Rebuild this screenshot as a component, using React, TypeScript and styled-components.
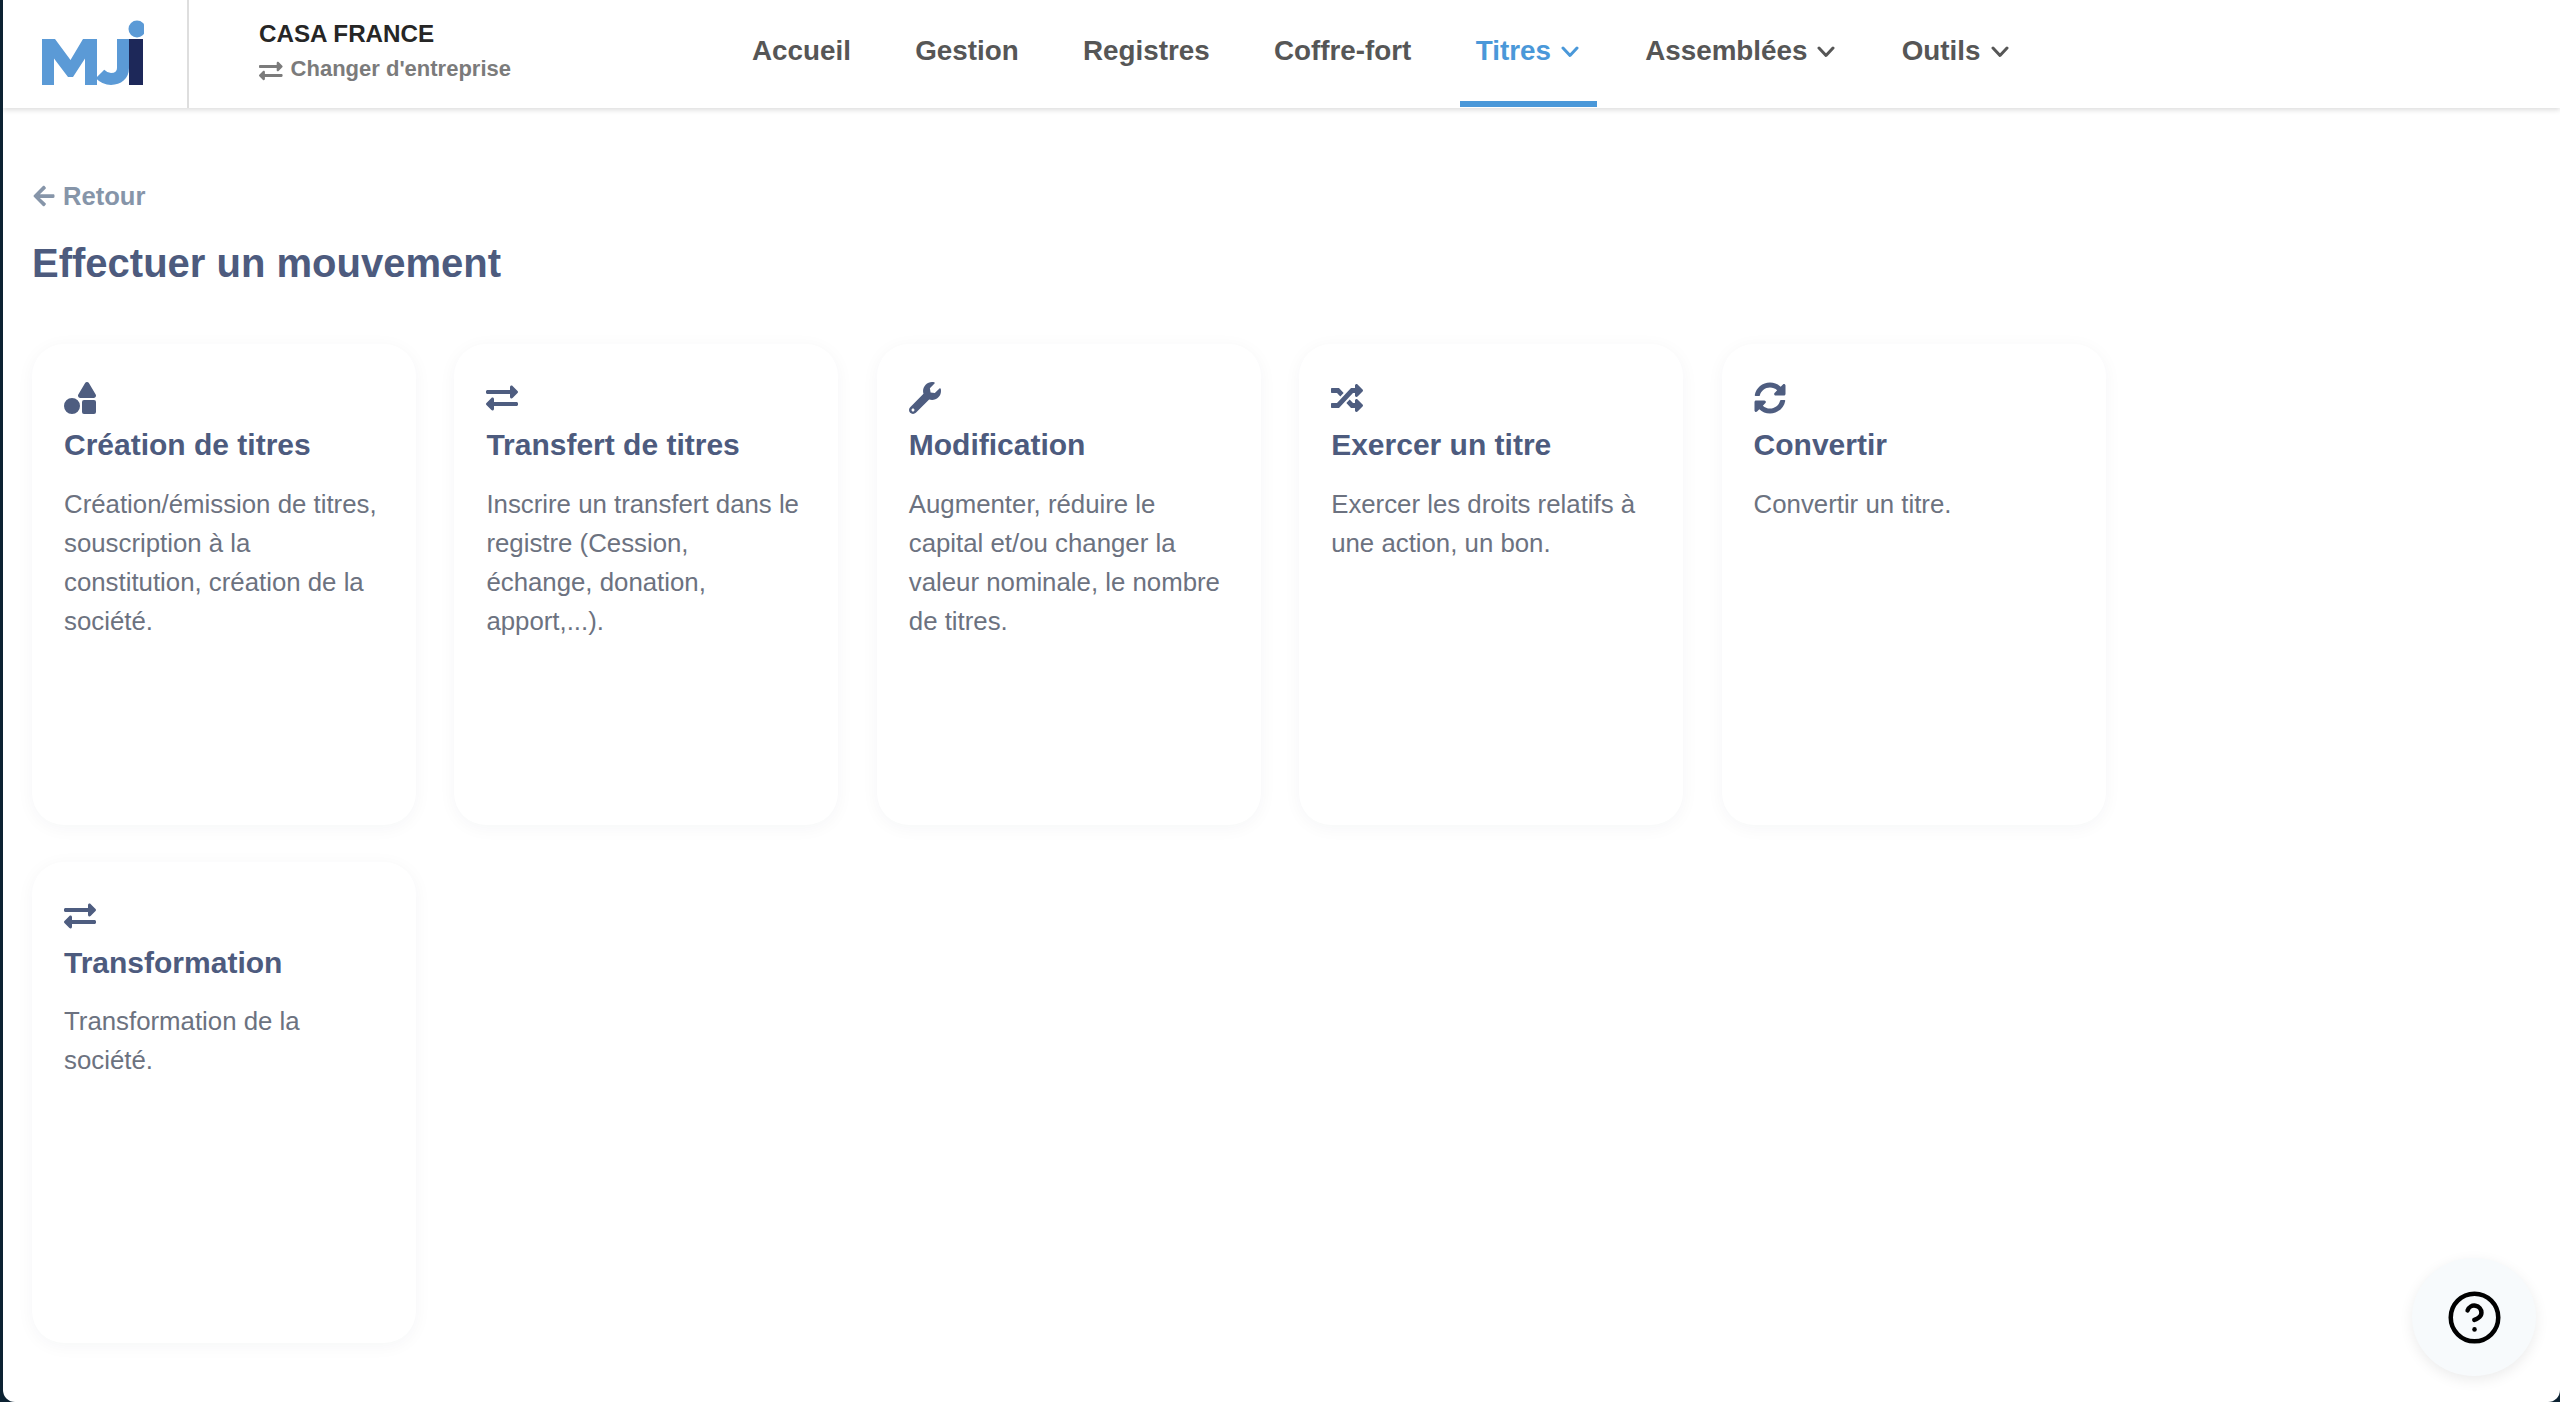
import React from "react";
import styled, { createGlobalStyle } from "styled-components";
import { CircleHelp } from "lucide-react";
import { FaArrowLeft, FaExchangeAlt, FaRandom, FaShapes, FaSyncAlt, FaWrench } from "react-icons/fa";

const GlobalStyle = createGlobalStyle`
  html, body {
    margin: 0;
    padding: 0;
    height: 100%;
    background: #0c2232;
  }
  * {
    box-sizing: border-box;
  }
`;

const Frame = styled.div`
  position: relative;
  height: 100vh;
  margin-left: 3px;
  overflow: hidden;
  background: #fff;
  border-radius: 0 0 12px 12px;
  font-family: "Liberation Sans", Arial, sans-serif;
`;

const Header = styled.header`
  display: flex;
  height: 108px;
  background: #fff;
  box-shadow: 0 2px 5px rgba(0, 0, 0, 0.14);
`;

const LogoBox = styled.div`
  display: flex;
  align-items: flex-start;
  width: 186px;
  height: 108px;
  padding: 20px 0 0 39px;
  border-right: 2px solid #dedede;
`;

const Company = styled.div`
  width: 252px;
  margin-left: 70px;
  padding-top: 20px;
  white-space: nowrap;
`;

const CompanyName = styled.div`
  font-size: 24.2px;
  line-height: 28px;
  font-weight: 700;
  color: #262626;
`;

const SwitchCompany = styled.div`
  display: flex;
  align-items: center;
  gap: 8px;
  margin-top: 7px;
  font-size: 22px;
  line-height: 28px;
  font-weight: 700;
  color: #7b7b7b;
`;

const SwitchIcon = styled(FaExchangeAlt)`
  margin-top: 4px;
`;

const Nav = styled.nav`
  display: flex;
  gap: 32.3px;
  margin-left: 225px;
`;

const NavItem = styled.div<{ $active?: boolean }>`
  display: flex;
  align-items: center;
  height: 107px;
  padding: 0 16px;
  border-bottom: 6px solid ${(p) => (p.$active ? "#4a98d9" : "transparent")};
  font-size: 27.8px;
  font-weight: 700;
  color: ${(p) => (p.$active ? "#4a98d9" : "#565656")};
`;

const Chevron = styled.svg`
  width: 18px;
  height: 12px;
  margin: 3px 2px 0 10px;
  fill: none;
  stroke: currentColor;
  stroke-width: 3;
  stroke-linecap: round;
  stroke-linejoin: round;
`;

const Main = styled.main`
  padding: 73px 0 0 29px;
`;

const BackLink = styled.div`
  display: flex;
  align-items: center;
  gap: 7px;
  font-size: 25.6px;
  line-height: 30px;
  font-weight: 700;
  color: #8695a9;
`;

const PageTitle = styled.h1`
  margin: 28px 0 0;
  font-size: 40px;
  line-height: 48px;
  font-weight: 700;
  color: #4d5b7e;
`;

const CardGrid = styled.div`
  display: grid;
  grid-template-columns: repeat(5, 384px);
  grid-auto-rows: 481px;
  column-gap: 38.4px;
  row-gap: 36.6px;
  margin-top: 57px;
`;

const Card = styled.article`
  padding: 38px 32px 0;
  background: #fff;
  border-radius: 32px;
  box-shadow: 0 3px 18px rgba(30, 40, 70, 0.045);
`;

const CardIcon = styled.div`
  display: flex;
  height: 32px;
  color: #4e5d80;
`;

const CardTitle = styled.h2`
  margin: 13px 0 0;
  font-size: 30px;
  line-height: 36px;
  font-weight: 700;
  color: #4d5b7e;
`;

const CardText = styled.p`
  max-width: 314px;
  margin: 21.5px 0 0;
  font-size: 25.8px;
  line-height: 39.2px;
  color: #6c7280;
`;

const HelpButton = styled.button`
  position: absolute;
  right: 24px;
  bottom: 26px;
  display: flex;
  align-items: center;
  justify-content: center;
  width: 124px;
  height: 118px;
  padding: 0;
  border: 0;
  border-radius: 50%;
  background: #f7fafc;
  box-shadow: 0 4px 14px rgba(0, 0, 0, 0.08);
  color: #000;
`;

const Logo = () => (
  <svg width="102" height="66" viewBox="0 0 102 66">
    <path
      fill="#5b9ad6"
      d="M0 19h13l15.5 21L41 19h14v46H43V38.5L31 57h-5L12 38.5V65H0z"
    />
    <path
      fill="none"
      stroke="#5b9ad6"
      strokeWidth="12"
      d="M81 19v29c0 7-5 11-12 11-5 0-8-2-11-5"
    />
    <rect x="87" y="19" width="14" height="46" fill="#1d2859" />
    <circle cx="95" cy="9" r="8.5" fill="#5b9ad6" />
  </svg>
);

const ChevronDown = () => (
  <Chevron viewBox="0 0 18 12">
    <polyline points="2,2 9,9.5 16,2" />
  </Chevron>
);

const navItems = [
  { label: "Accueil" },
  { label: "Gestion" },
  { label: "Registres" },
  { label: "Coffre-fort" },
  { label: "Titres", menu: true, active: true },
  { label: "Assemblées", menu: true },
  { label: "Outils", menu: true },
];

const cards = [
  {
    icon: <FaShapes size={32} />,
    title: "Création de titres",
    text: "Création/émission de titres, souscription à la constitution, création de la société.",
  },
  {
    icon: <FaExchangeAlt size={32} />,
    title: "Transfert de titres",
    text: "Inscrire un transfert dans le registre (Cession, échange, donation, apport,...).",
  },
  {
    icon: <FaWrench size={32} />,
    title: "Modification",
    text: "Augmenter, réduire le capital et/ou changer la valeur nominale, le nombre de titres.",
  },
  {
    icon: <FaRandom size={32} />,
    title: "Exercer un titre",
    text: "Exercer les droits relatifs à une action, un bon.",
  },
  {
    icon: <FaSyncAlt size={32} />,
    title: "Convertir",
    text: "Convertir un titre.",
  },
  {
    icon: <FaExchangeAlt size={32} />,
    title: "Transformation",
    text: "Transformation de la société.",
  },
];

const App = () => {
  return (
    <Frame>
      <GlobalStyle />
      <Header>
        <LogoBox>
          <Logo />
        </LogoBox>
        <Company>
          <CompanyName>CASA FRANCE</CompanyName>
          <SwitchCompany>
            <SwitchIcon size={24} />
            Changer d'entreprise
          </SwitchCompany>
        </Company>
        <Nav>
          {navItems.map((item) => (
            <NavItem key={item.label} $active={item.active}>
              {item.label}
              {item.menu && <ChevronDown />}
            </NavItem>
          ))}
        </Nav>
      </Header>
      <Main>
        <BackLink>
          <FaArrowLeft size={24} />
          Retour
        </BackLink>
        <PageTitle>Effectuer un mouvement</PageTitle>
        <CardGrid>
          {cards.map((card) => (
            <Card key={card.title}>
              <CardIcon>{card.icon}</CardIcon>
              <CardTitle>{card.title}</CardTitle>
              <CardText>{card.text}</CardText>
            </Card>
          ))}
        </CardGrid>
      </Main>
      <HelpButton aria-label="Aide">
        <CircleHelp size={57} strokeWidth={1.9} />
      </HelpButton>
    </Frame>
  );
};

export default App;
